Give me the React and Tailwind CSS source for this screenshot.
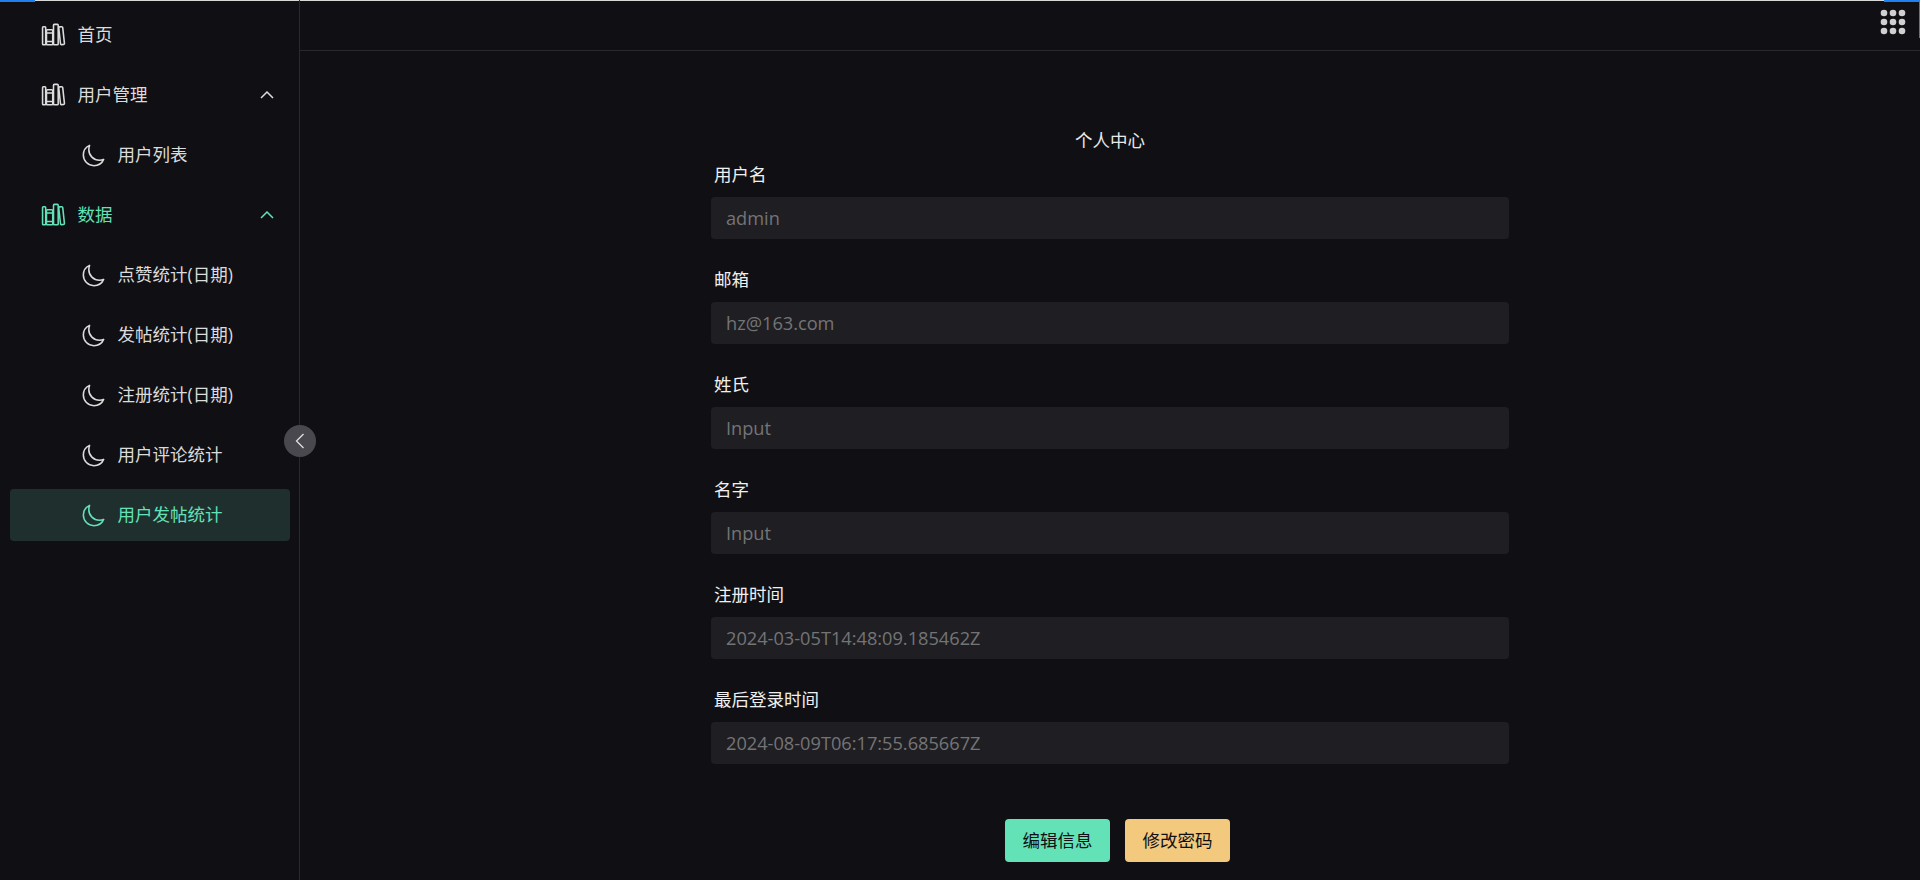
import { IoLibraryOutline, IoMoonOutline } from "react-icons/io5";

const menu = [
  { label: "首页", top: true },
  { label: "用户管理", top: true, arrow: true },
  { label: "用户列表" },
  { label: "数据", top: true, arrow: true, accent: true },
  { label: "点赞统计(日期)" },
  { label: "发帖统计(日期)" },
  { label: "注册统计(日期)" },
  { label: "用户评论统计" },
  { label: "用户发帖统计", active: true },
];

const fields = [
  { label: "用户名", value: "admin" },
  { label: "邮箱", value: "hz@163.com" },
  { label: "姓氏", placeholder: "Input" },
  { label: "名字", placeholder: "Input" },
  { label: "注册时间", value: "2024-03-05T14:48:09.185462Z" },
  { label: "最后登录时间", value: "2024-08-09T06:17:55.685667Z" },
];

function MenuItem({ item }) {
  const green = item.active || item.accent;
  return (
    <div
      className={`flex h-[52px] items-center rounded-[4px] ${item.top ? "pl-[31px]" : "pl-[71px]"} pr-[15px] ${
        item.active ? "bg-[#1f2f2d]" : ""
      } ${green ? "text-[#63e2b7]" : "text-[#dcdcdc]"}`}
    >
      {item.top ? (
        <IoLibraryOutline className="mb-[1px] h-[25px] w-[25px] shrink-0" />
      ) : (
        <IoMoonOutline className="h-[25px] w-[25px] shrink-0" />
      )}
      <span className="ml-[11.5px] flex-1 whitespace-nowrap pb-[2px]">{item.label}</span>
      {item.arrow && (
        <svg width="14" height="8" viewBox="0 0 14 8" fill="none" stroke="currentColor" strokeWidth="1.5" className="mb-[1px] mr-[1px]">
          <path d="M1 7l6-6 6 6" />
        </svg>
      )}
    </div>
  );
}

export default function App() {
  return (
    <div className="relative flex h-screen overflow-hidden bg-[#101014] text-[17.5px] text-[#d5d5d6] font-['Open_Sans','Noto_Sans_CJK_SC',sans-serif]">
      {/* loading bar */}
      <div className="absolute inset-x-0 top-0 h-px bg-[#d8d8d8]" />
      <div className="absolute left-0 top-0 h-[2px] w-[35px] bg-[#2080f0]" />
      <div className="absolute right-0 top-0 h-[2px] w-[36px] bg-[#2080f0]" />
      <div className="absolute right-0 top-0 h-[38px] w-px bg-[#2080f0]" />

      <aside className="relative w-[300px] shrink-0 border-r border-[#2a2a2e] pl-[10px] pr-[9px] pt-[9px]">
        <div className="flex flex-col gap-[8px]">
          {menu.map((item) => (
            <MenuItem key={item.label} item={item} />
          ))}
        </div>
        <div className="absolute right-[-17px] top-[425px] flex h-[32px] w-[32px] items-center justify-center rounded-full bg-[#48484e] text-[#e0e0e0]">
          <svg width="10" height="16" viewBox="0 0 10 16" fill="none" stroke="currentColor" strokeWidth="1.3">
            <path d="M8.5 1L1.5 8l7 7" />
          </svg>
        </div>
      </aside>

      <main className="flex min-w-0 flex-1 flex-col">
        <header className="flex h-[51px] shrink-0 items-center justify-end border-b border-[#2a2a2e] pr-[14px]">
          <svg width="26" height="26" viewBox="0 0 26 26" fill="#d0d0d0" className="mb-[6px]">
            {[4, 13, 22].map((y) =>
              [4, 13, 22].map((x) => <circle key={`${x}-${y}`} cx={x} cy={y} r="3.3" />)
            )}
          </svg>
        </header>

        <div className="mx-auto flex w-[798px] flex-col pt-[76px]">
          <h1 className="text-center text-[17.5px] font-normal leading-[26px] text-[#e8e8e8]">个人中心</h1>
          <div className="mt-[6px] flex flex-col gap-[25px]">
            {fields.map((f) => (
              <div key={f.label}>
                <label className="block h-[38px] pl-[3px] leading-[30px] text-[#f0f0f0]">{f.label}</label>
                <input
                  readOnly
                  value={f.value ?? ""}
                  placeholder={f.placeholder}
                  className="block h-[42px] w-full rounded-[4px] bg-[#1f1f23] px-[15px] text-[18.2px] text-[#747476] placeholder:text-[#747476] outline-none"
                />
              </div>
            ))}
          </div>
          <div className="mt-[55px] flex justify-center gap-[15px] pl-[15px]">
            <button className="h-[43px] w-[105px] rounded-[4px] bg-[#63e2b7] text-[#101014]">编辑信息</button>
            <button className="h-[43px] w-[105px] rounded-[4px] bg-[#f2c97d] text-[#101014]">修改密码</button>
          </div>
        </div>
      </main>
    </div>
  );
}
